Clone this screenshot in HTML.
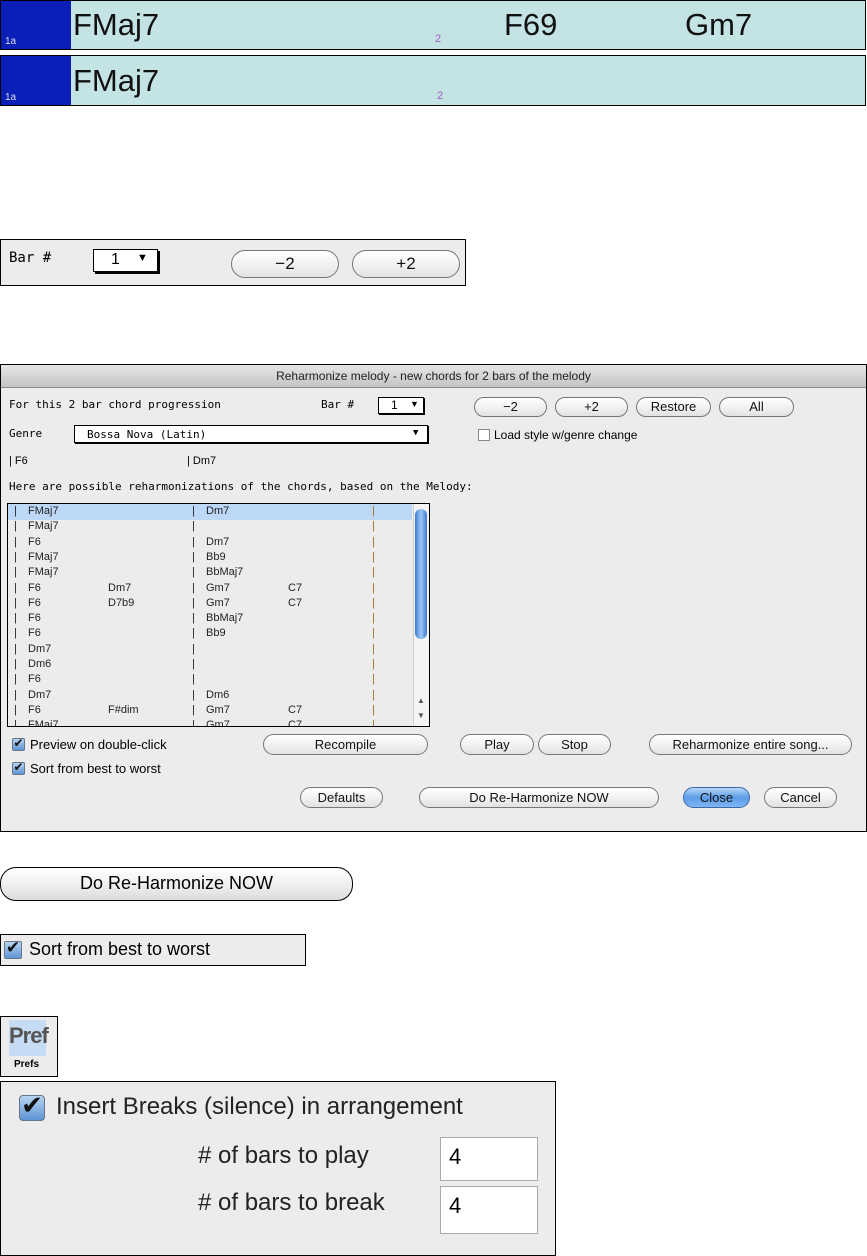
<!DOCTYPE html>
<html><head><meta charset="utf-8"><style>
*{margin:0;padding:0;box-sizing:border-box}
body{width:867px;height:1256px;background:#fff;position:relative;font-family:"Liberation Sans",sans-serif;overflow:hidden}
.a{position:absolute}
.strip{position:absolute;left:0;width:866px;background:#c4e3e4;border:1px solid #000}
.blk{position:absolute;left:0;top:0;bottom:0;width:70px;background:#0a1fb8}
.blk span{position:absolute;left:4px;bottom:2px;color:#dde;font-size:10px}
.ch{position:absolute;font-size:31px;color:#111}
.two{position:absolute;color:#9a5fc0;font-size:11px}
.btn{position:absolute;border:1px solid #777;border-radius:11px;background:linear-gradient(#fff,#f2f2f2 50%,#e2e2e2);text-align:center;font-size:13px;color:#111}
.mono{font-family:"DejaVu Sans Mono","Liberation Mono",monospace}
.cb{position:absolute;width:13px;height:13px;border:1px solid #678;border-radius:2px;background:linear-gradient(#b8d4f0,#5d95d6);color:#111;text-align:center}
.cb i{font-style:normal;position:absolute;left:0;right:0}
.row{position:absolute;left:8px;width:402px;height:15px;font-size:11px;color:#222}
.row span{position:absolute;top:1px}
</style></head><body>

<div class="strip" style="top:0;height:50px"><div class="blk"><span>1a</span></div>
<div class="ch" style="left:72px;top:6px">FMaj7</div><div class="two" style="left:434px;top:32px">2</div>
<div class="ch" style="left:503px;top:6px">F69</div><div class="ch" style="left:684px;top:6px">Gm7</div></div>
<div class="strip" style="top:55px;height:51px"><div class="blk"><span>1a</span></div>
<div class="ch" style="left:72px;top:7px">FMaj7</div><div class="two" style="left:436px;top:34px">2</div></div>

<div class="a" style="left:0;top:239px;width:466px;height:47px;border:1px solid #000;background:#ececec">
<div class="a mono" style="left:8px;top:10px;font-size:14px">Bar #</div>
<div class="a" style="left:92px;top:9px;width:65px;height:23px;border:1px solid #000;box-shadow:2px 2px 0 #000;background:#fff;font-size:16px"><span class="a" style="left:17px;top:1px">1</span><span class="a" style="left:43px;top:2px;font-size:11px">▼</span></div>
<div class="btn" style="left:230px;top:10px;width:108px;height:28px;font-size:17px;line-height:26px;border-radius:14px">−2</div>
<div class="btn" style="left:351px;top:10px;width:108px;height:28px;font-size:17px;line-height:26px;border-radius:14px">+2</div>
</div>

<div class="a" style="left:0;top:364px;width:867px;height:468px;border:1px solid #000;background:#ececec">
<div class="a" style="left:0;top:0;width:865px;height:23px;background:linear-gradient(#e6e6e6,#c4c4c4);border-bottom:1px solid #888;text-align:center;font-size:12px;line-height:23px;color:#222">Reharmonize melody - new chords for 2 bars of the melody</div>
<div class="a mono" style="left:8px;top:33px;font-size:11px">For this 2 bar chord progression</div>
<div class="a mono" style="left:320px;top:33px;font-size:11px">Bar #</div>
<div class="a" style="left:377px;top:32px;width:46px;height:17px;border:1px solid #000;box-shadow:1px 1px 0 #000;background:#fff;font-size:12px"><span class="a" style="left:12px;top:0">1</span><span class="a" style="left:31px;top:1px;font-size:9px">▼</span></div>
<div class="btn" style="left:473px;top:32px;width:73px;height:20px;line-height:18px">−2</div>
<div class="btn" style="left:554px;top:32px;width:73px;height:20px;line-height:18px">+2</div>
<div class="btn" style="left:635px;top:32px;width:75px;height:20px;line-height:18px">Restore</div>
<div class="btn" style="left:718px;top:32px;width:75px;height:20px;line-height:18px">All</div>
<div class="a mono" style="left:8px;top:62px;font-size:11px">Genre</div>
<div class="a mono" style="left:73px;top:60px;width:354px;height:18px;border:1px solid #000;box-shadow:1px 1px 0 #000;background:#fff;font-size:11px"><span class="a" style="left:12px;top:2px">Bossa Nova (Latin)</span><span class="a" style="left:338px;top:2px;font-size:9px">▼</span></div>
<div class="a" style="left:477px;top:64px;width:12px;height:12px;border:1px solid #888;background:#fff"></div>
<div class="a" style="left:493px;top:63px;font-size:12px">Load style w/genre change</div>
<div class="a" style="left:8px;top:90px;font-size:11px">| F6</div>
<div class="a" style="left:186px;top:90px;font-size:11px">| Dm7</div>
<div class="a mono" style="left:8px;top:115px;font-size:11px">Here are possible reharmonizations of the chords, based on the Melody:</div>
<div class="a" style="left:6px;top:138px;width:423px;height:224px;border:1px solid #000;background:#ececec;overflow:hidden">
<div class="a" style="left:0;top:0;width:404px;height:16px;background:#bcd8f6"></div>
<div class="a" style="left:405px;top:0;width:17px;height:222px;background:#f4f4f4;border-left:1px solid #ccc"></div>
<div class="a" style="left:407px;top:5px;width:12px;height:130px;border-radius:6px;background:linear-gradient(90deg,#3c7ad4,#9cc8f4,#3c7ad4)"></div>
<div class="a" style="left:409px;top:192px;font-size:8px;color:#555">▲</div><div class="a" style="left:409px;top:207px;font-size:8px;color:#555">▼</div>
</div>
<div id="rows"></div>
<div class="cb" style="left:11px;top:373px"><i style="top:-3px;font-size:12px">✔</i></div><div class="a" style="left:29px;top:372px;font-size:13px">Preview on double-click</div>
<div class="cb" style="left:11px;top:397px"><i style="top:-3px;font-size:12px">✔</i></div><div class="a" style="left:29px;top:396px;font-size:13px">Sort from best to worst</div>
<div class="btn" style="left:262px;top:369px;width:165px;height:21px;line-height:19px">Recompile</div>
<div class="btn" style="left:459px;top:369px;width:74px;height:21px;line-height:19px">Play</div>
<div class="btn" style="left:537px;top:369px;width:73px;height:21px;line-height:19px">Stop</div>
<div class="btn" style="left:648px;top:369px;width:203px;height:21px;line-height:19px">Reharmonize entire song...</div>
<div class="btn" style="left:299px;top:422px;width:83px;height:21px;line-height:19px">Defaults</div>
<div class="btn" style="left:418px;top:422px;width:240px;height:21px;line-height:19px">Do Re-Harmonize NOW</div>
<div class="btn" style="left:682px;top:422px;width:67px;height:21px;line-height:19px;background:linear-gradient(#b6d6fa,#5d9ce8 50%,#7fb6f4);border-color:#3a6aa8">Close</div>
<div class="btn" style="left:763px;top:422px;width:73px;height:21px;line-height:19px">Cancel</div>
</div>

<div class="a" style="left:0;top:867px;width:353px;height:34px;border:1px solid #000;border-radius:16px;background:linear-gradient(#fff,#f0f0f0 50%,#dcdcdc);text-align:center;font-size:18px;line-height:31px">Do Re-Harmonize NOW</div>
<div class="a" style="left:0;top:934px;width:306px;height:32px;border:1px solid #000;background:#ececec">
<div class="cb" style="left:3px;top:6px;width:18px;height:18px"><i style="top:-4px;font-size:17px">✔</i></div><div class="a" style="left:28px;top:4px;font-size:18px">Sort from best to worst</div></div>
<div class="a" style="left:0;top:1016px;width:58px;height:61px;border:1px solid #000;background:#ececec">
<div class="a" style="left:8px;top:3px;width:37px;height:36px;background:#c6dcf4;font-size:22px;color:#555;font-weight:bold;text-align:center;line-height:32px;letter-spacing:-1px">Pref</div>
<div class="a" style="left:13px;top:42px;font-size:10px;font-weight:bold">Prefs</div></div>
<div class="a" style="left:0;top:1081px;width:556px;height:175px;border:1px solid #000;background:#ececec">
<div class="cb" style="left:18px;top:13px;width:26px;height:26px;border-radius:4px"><i style="top:-6px;font-size:26px">✔</i></div>
<div class="a" style="left:55px;top:11px;font-size:24px;color:#222">Insert Breaks (silence) in arrangement</div>
<div class="a" style="left:197px;top:60px;font-size:24px;color:#222"># of bars to play</div>
<div class="a" style="left:439px;top:55px;width:98px;height:44px;background:#fff;border:1px solid #aaa;font-size:22px;padding:6px 0 0 8px">4</div>
<div class="a" style="left:197px;top:107px;font-size:24px;color:#222"># of bars to break</div>
<div class="a" style="left:439px;top:104px;width:98px;height:48px;background:#fff;border:1px solid #aaa;font-size:22px;padding:6px 0 0 8px">4</div>
</div>

<script>
var d=[["FMaj7","","Dm7",""],["FMaj7","","",""],["F6","","Dm7",""],["FMaj7","","Bb9",""],["FMaj7","","BbMaj7",""],["F6","Dm7","Gm7","C7"],["F6","D7b9","Gm7","C7"],["F6","","BbMaj7",""],["F6","","Bb9",""],["Dm7","","",""],["Dm6","","",""],["F6","","",""],["Dm7","","Dm6",""],["F6","F#dim","Gm7","C7"],["FMaj7","","Gm7","C7"]];
var h="";d.forEach(function(r,i){var t=139+i*15.3;h+='<div class="row" style="top:'+t+'px;'+(i==14?'height:8px;overflow:hidden;':'')+'"><span style="left:5px">|</span><span style="left:19px">'+r[0]+'</span><span style="left:99px">'+r[1]+'</span><span style="left:183px">|</span><span style="left:197px">'+r[2]+'</span><span style="left:279px">'+r[3]+'</span><span style="left:363px;color:#a07020">|</span></div>'});
document.getElementById("rows").innerHTML=h;
</script>
</body></html>
